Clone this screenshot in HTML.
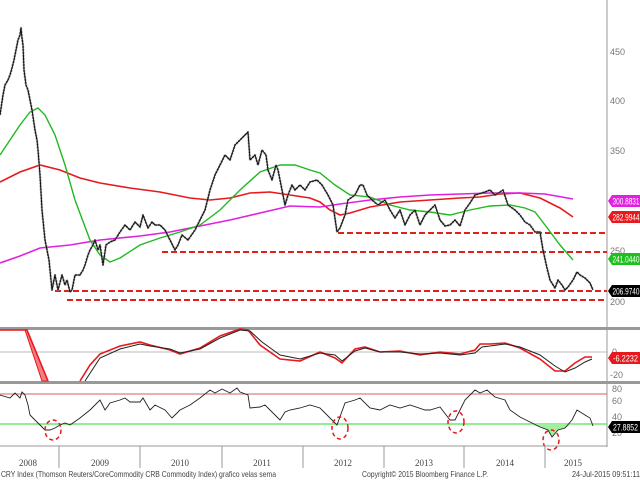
<!DOCTYPE html>
<html><head><meta charset="utf-8"><style>
html,body{margin:0;padding:0;background:#fff;width:640px;height:480px;overflow:hidden}
svg{display:block;font-family:"Liberation Sans",sans-serif}
</style></head><body>
<svg width="640" height="480" viewBox="0 0 640 480" xmlns="http://www.w3.org/2000/svg">
<rect width="640" height="480" fill="#fff"/>
<line x1="607" y1="0" x2="607" y2="447" stroke="#999" stroke-width="1"/>
<g font-size="9" fill="#777">
<text x="610" y="55">450</text><text x="610" y="104">400</text><text x="610" y="154">350</text>
<text x="610" y="254">250</text><text x="610" y="305">200</text>
<text x="612" y="355">0</text><text x="610" y="378">-20</text>
<text x="612" y="392">80</text><text x="612" y="404">60</text><text x="612" y="420">40</text><text x="612" y="436">20</text>
</g>
<g stroke="#e0201c" stroke-width="2" stroke-dasharray="6,3">
<line x1="338" y1="233" x2="607" y2="233"/>
<line x1="162" y1="252" x2="607" y2="252"/>
<line x1="55" y1="291" x2="607" y2="291"/>
<line x1="67" y1="300" x2="607" y2="300"/>
</g>
<polyline fill="none" stroke="#e8181c" stroke-width="1.6" points="0,182 20,172 40,165 60,170 80,178 100,183 130,188 160,192 190,198 210,200 230,198 250,193 270,192 290,195 310,198 320,202 330,210 340,215 350,213 370,207 400,202 430,200 460,198 480,197 500,194 520,193 540,198 560,208 573,217"/>
<polyline fill="none" stroke="#e020e0" stroke-width="1.6" points="0,263 20,256 40,248 70,245 100,240 140,236 170,232 200,226 230,220 260,213 290,206 320,207 340,204 370,200 400,197 430,195 460,194 490,193 520,193 545,194 573,199"/>
<polyline fill="none" stroke="#22b822" stroke-width="1.4" points="0,155 10,140 20,125 30,112 38,108 45,115 55,135 65,165 75,200 90,240 100,255 110,262 120,258 140,245 160,238 180,232 200,225 220,210 240,190 260,172 280,165 295,165 310,170 320,173 335,185 350,195 370,197 390,205 410,210 430,212 450,215 470,210 490,206 510,205 525,208 535,212 545,225 560,245 573,260"/>
<polyline fill="none" stroke="#888" stroke-width="2.2" stroke-linejoin="round" stroke-dasharray="2,1" points="0,115 3,95 5,85 8,80 10,75 12,68 14,60 16,50 18,40 20,35 21,28 22,38 23,45 24,70 26,85 28,90 30,100 32,110 35,130 37,140 38,150 40,175 42,210 44,230 45,240 47,250 49,260 52,290 55,275 58,290 62,275 65,285 67,280 70,292 72,290 75,275 80,275 83,270 85,265 88,255 90,250 93,245 95,240 98,250 100,245 103,265 106,245 110,242 115,240 120,232 125,225 130,230 135,222 140,227 143,215 148,228 152,222 155,225 160,225 165,230 170,240 175,250 178,245 182,235 188,240 195,230 200,220 205,210 210,190 215,175 220,165 225,155 230,160 235,145 240,140 245,135 248,132 250,160 255,155 258,165 262,150 266,155 268,170 272,180 276,165 278,170 282,190 285,205 288,195 292,185 295,190 300,185 305,190 310,182 317,180 322,185 328,195 333,205 337,232 340,228 345,215 348,200 355,195 360,185 363,185 367,195 372,200 378,205 385,200 390,210 395,218 400,210 405,225 410,215 415,210 420,225 425,215 430,210 435,205 440,220 445,226 450,225 455,220 460,226 465,210 470,203 475,195 485,192 490,190 495,195 500,192 503,190 508,205 515,210 520,215 525,222 530,225 535,232 540,232 543,250 547,268 550,280 555,288 558,280 562,285 565,290 568,287 573,280 577,272 580,275 585,278 590,283 593,290"/>
<polyline fill="none" stroke="#111" stroke-width="1" stroke-linejoin="round" points="0,115 3,95 5,85 8,80 10,75 12,68 14,60 16,50 18,40 20,35 21,28 22,38 23,45 24,70 26,85 28,90 30,100 32,110 35,130 37,140 38,150 40,175 42,210 44,230 45,240 47,250 49,260 52,290 55,275 58,290 62,275 65,285 67,280 70,292 72,290 75,275 80,275 83,270 85,265 88,255 90,250 93,245 95,240 98,250 100,245 103,265 106,245 110,242 115,240 120,232 125,225 130,230 135,222 140,227 143,215 148,228 152,222 155,225 160,225 165,230 170,240 175,250 178,245 182,235 188,240 195,230 200,220 205,210 210,190 215,175 220,165 225,155 230,160 235,145 240,140 245,135 248,132 250,160 255,155 258,165 262,150 266,155 268,170 272,180 276,165 278,170 282,190 285,205 288,195 292,185 295,190 300,185 305,190 310,182 317,180 322,185 328,195 333,205 337,232 340,228 345,215 348,200 355,195 360,185 363,185 367,195 372,200 378,205 385,200 390,210 395,218 400,210 405,225 410,215 415,210 420,225 425,215 430,210 435,205 440,220 445,226 450,225 455,220 460,226 465,210 470,203 475,195 485,192 490,190 495,195 500,192 503,190 508,205 515,210 520,215 525,222 530,225 535,232 540,232 543,250 547,268 550,280 555,288 558,280 562,285 565,290 568,287 573,280 577,272 580,275 585,278 590,283 593,290"/>
<g font-size="9.5" fill="#fff">
<path d="M608,201 L612,195 H640 V207 H612 Z" fill="#e020e0"/><text x="612.5" y="204.5" textLength="27" lengthAdjust="spacingAndGlyphs">300.8831</text>
<path d="M608,217 L612,211 H640 V223 H612 Z" fill="#e8181c"/><text x="612.5" y="220.5" textLength="27" lengthAdjust="spacingAndGlyphs">282.9944</text>
<path d="M608,259 L612,253 H640 V265 H612 Z" fill="#1ec01e"/><text x="612.5" y="262.5" textLength="27" lengthAdjust="spacingAndGlyphs">241.0440</text>
<path d="M608,291 L612,285 H640 V297 H612 Z" fill="#000"/><text x="612.5" y="294.5" textLength="27" lengthAdjust="spacingAndGlyphs">206.9740</text>
</g>
<rect x="0" y="327" width="640" height="3" fill="#999"/>
<rect x="0" y="381" width="640" height="3" fill="#999"/>
<line x1="0" y1="352" x2="607" y2="352" stroke="#bbb"/>
<path d="M27,330 L48,381 L42,381 L25,330 Z" fill="#f08080" stroke="#e8181c" stroke-width="1"/>
<path fill="none" stroke="#e8181c" stroke-width="1.6" d="M0,330 L27,330 L48,381 M80,381 L90,365 100,354 120,346 140,342 150,345 170,350 180,354 200,348 220,336 240,329 248,330 260,345 280,359 300,361 320,352 335,358 342,363 355,349 365,347 380,352 400,351 420,355 440,352 460,354 475,350 480,344 490,344 505,343 520,348 540,359 555,371 565,371 575,363 585,357 592,357"/>
<path fill="none" stroke="#222" stroke-width="1" d="M85,381 L100,358 120,349 140,344 150,346 170,349 180,353 200,349 220,338 240,330 250,331 262,342 280,355 300,359 320,353 335,355 342,361 355,351 365,348 380,352 400,352 420,354 440,353 460,355 475,353 482,347 490,346 505,344 520,347 540,355 555,366 565,372 575,368 585,362 592,359"/>
<path d="M608,358 L612,352 H640 V364 H612 Z" fill="#e8181c"/><text x="613" y="361.5" fill="#fff" font-size="9.5" textLength="25" lengthAdjust="spacingAndGlyphs">-6.2232</text>
<line x1="0" y1="394" x2="607" y2="394" stroke="#d06060"/>
<line x1="0" y1="424" x2="607" y2="424" stroke="#50e050" stroke-width="1.2"/>
<path d="M530,424 L540,427 548,430 552,437 558,430 565,428 572,424 Z" fill="#a0f0a0"/>
<polyline fill="none" stroke="#222" stroke-width="0.9" points="0,395 10,398 15,393 20,398 22,392 25,395 28,405 30,415 35,420 40,425 45,430 50,430 55,428 60,425 65,423 70,425 80,418 90,410 95,405 100,400 105,410 110,403 120,400 125,398 130,402 140,402 143,398 150,410 155,405 165,410 172,418 175,415 180,410 190,405 200,398 210,390 215,393 222,389 230,393 237,388 240,392 248,395 250,408 260,407 265,405 270,410 280,420 285,412 290,410 300,408 310,405 320,408 330,418 337,425 345,403 355,400 360,398 370,408 380,410 390,405 400,408 410,405 425,410 430,410 440,407 450,420 455,420 465,400 475,390 480,393 487,390 495,397 505,400 510,410 520,417 530,422 540,427 548,430 552,437 558,430 565,428 572,420 577,410 585,415 590,418 593,426"/>
<g fill="none" stroke="#e8181c" stroke-width="1.5" stroke-dasharray="4,3">
<ellipse cx="53" cy="430" rx="8" ry="10"/>
<ellipse cx="340" cy="428" rx="8" ry="11"/>
<ellipse cx="456" cy="422" rx="8" ry="11"/>
<ellipse cx="551" cy="440" rx="8" ry="10"/>
</g>
<path d="M608,427 L612,421 H640 V433 H612 Z" fill="#000"/><text x="613" y="430.5" fill="#fff" font-size="9.5" textLength="25" lengthAdjust="spacingAndGlyphs">27.8852</text>
<line x1="0" y1="446" x2="607" y2="446" stroke="#999"/>
<g stroke="#999"><line x1="59" y1="446" x2="59" y2="468"/><line x1="140" y1="446" x2="140" y2="468"/><line x1="222" y1="446" x2="222" y2="468"/><line x1="303" y1="446" x2="303" y2="468"/><line x1="384" y1="446" x2="384" y2="468"/><line x1="464" y1="446" x2="464" y2="468"/><line x1="545" y1="446" x2="545" y2="468"/></g>
<g font-size="9" fill="#444" font-family="Liberation Serif,serif" text-anchor="middle">
<text x="28" y="466">2008</text><text x="100" y="466">2009</text><text x="180" y="466">2010</text><text x="262" y="466">2011</text>
<text x="343" y="466">2012</text><text x="424" y="466">2013</text><text x="505" y="466">2014</text><text x="573" y="466">2015</text>
</g>
<g font-size="8.3" fill="#444">
<text x="1" y="477" textLength="275" lengthAdjust="spacingAndGlyphs">CRY Index (Thomson Reuters/CoreCommodity CRB Commodity Index) grafico velas sema</text>
<text x="362" y="477" textLength="126" lengthAdjust="spacingAndGlyphs">Copyright© 2015 Bloomberg Finance L.P.</text>
<text x="572" y="477" textLength="68" lengthAdjust="spacingAndGlyphs">24-Jul-2015 09:51:11</text>
</g>
</svg>
</body></html>
